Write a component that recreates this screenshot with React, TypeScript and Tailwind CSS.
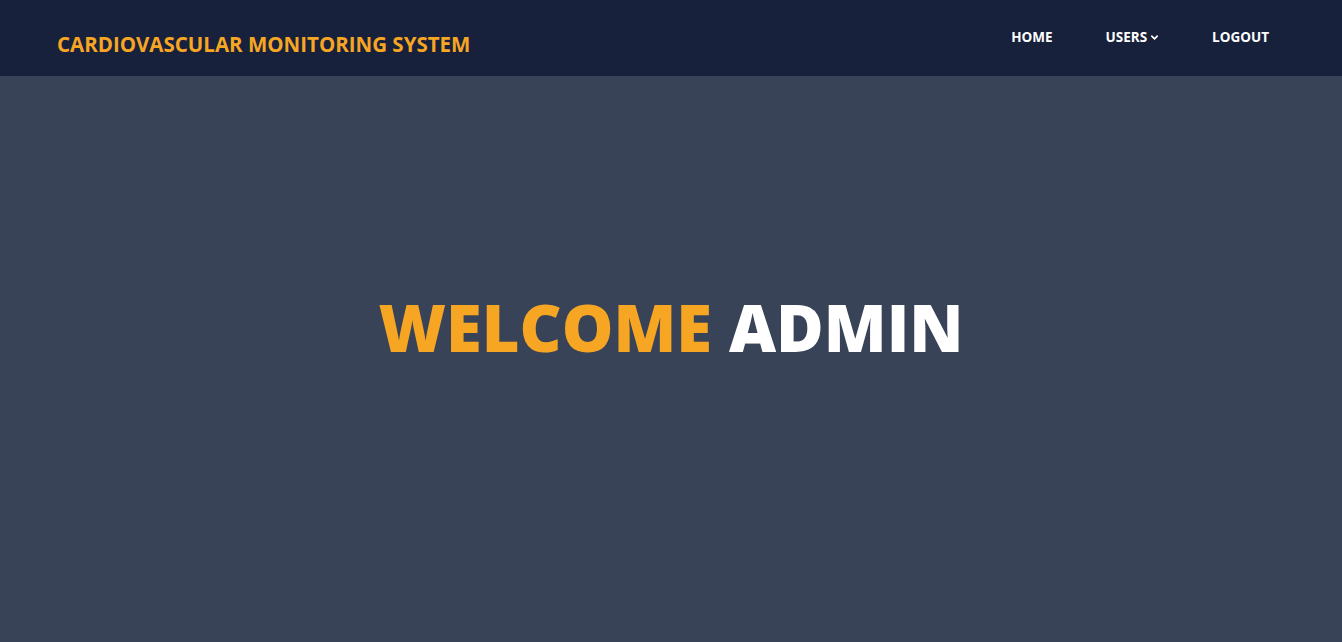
import React from "react";

export default function App() {
  return (
    <div className="min-h-[642px] flex flex-col bg-[#394357]" style={{ fontFamily: '"Open Sans", "Noto Sans", sans-serif' }}>
      <header className="h-[76px] bg-[#18213b] flex items-start justify-between pl-[57px] pr-[73px]">
        <div className="pt-[30px] text-[20.5px] font-bold text-[#f6a623] leading-[28px]">CARDIOVASCULAR MONITORING SYSTEM</div>
        <nav className="flex items-center gap-[53px] pt-[27px] text-[13.5px] font-bold text-white leading-[20px]">
          <span>HOME</span>
          <span className="flex items-center gap-[3px]">
            USERS
            <svg width="9" height="9" viewBox="0 0 10 10" className="mt-[1px]">
              <path d="M2 3.5 L5 6.5 L8 3.5" fill="none" stroke="white" strokeWidth="1.8" strokeLinecap="round" strokeLinejoin="round" />
            </svg>
          </span>
          <span>LOGOUT</span>
        </nav>
      </header>
      <main className="flex-1 flex justify-center pt-[206px]">
        <h1 className="text-[65px] font-extrabold leading-[90px]">
          <span className="text-[#f6a623]">WELCOME</span> <span className="text-white">ADMIN</span>
        </h1>
      </main>
    </div>
  );
}
